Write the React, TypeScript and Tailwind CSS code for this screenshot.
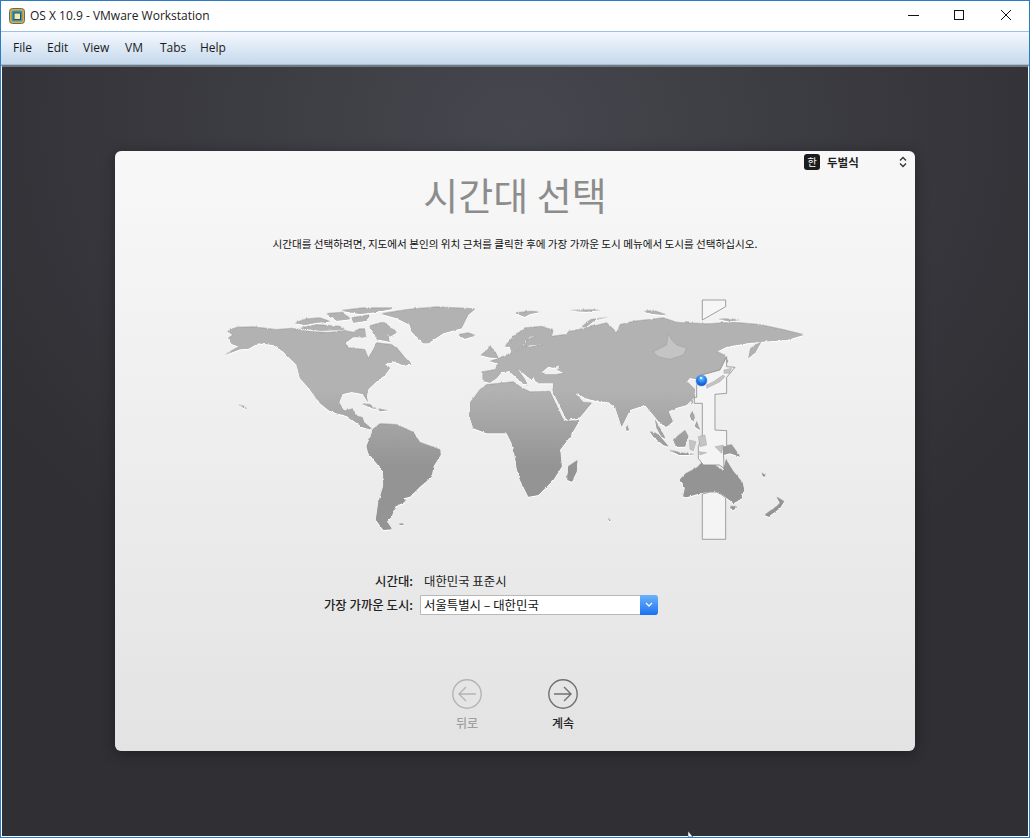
import React from 'react';

const kr = "font-['Noto_Sans_CJK_KR','Noto_Sans',sans-serif]";
const ui = "font-['Open_Sans','Noto_Sans',sans-serif]";

const menus = [
  { label: 'File', width: 'w-[34px]' },
  { label: 'Edit', width: 'w-[36px]' },
  { label: 'View', width: 'w-[42px]' },
  { label: 'VM', width: 'w-[35px]' },
  { label: 'Tabs', width: 'w-[40px]' },
  { label: 'Help', width: 'w-[40px]' },
];

// shapes traced from 3x crops, so coordinates are crop pixels
const westLand = [
  // north + central america
  'M22,125 L50,113 L100,112 L170,120 L215,116 L270,125 L330,128 L372,122 L400,128 L418,118 L435,118 L437,142 L400,142 L375,160 L385,175 L435,180 L445,205 L460,180 L470,160 L515,165 L535,180 L555,205 L575,225 L545,224 L520,212 L492,225 L510,235 L495,255 L472,272 L445,298 L440,320 L443,336 L428,312 L395,306 L368,312 L357,338 L372,364 L398,358 L405,378 L428,384 L432,398 L458,420 L445,416 L428,412 L405,395 L380,378 L345,368 L325,360 L300,340 L272,300 L298,340 L268,296 L240,265 L230,225 L190,185 L160,165 L115,160 L85,176 L60,178 L15,195 L58,170 L35,162 L25,146 L38,135 Z',
  // arctic islands
  'M225,100 L260,88 L300,85 L330,95 L290,98 L255,105 Z',
  'M240,115 L290,105 L360,110 L372,120 L300,122 Z',
  'M320,72 L365,68 L392,88 L350,92 Z',
  'M395,85 L450,75 L440,92 L400,98 Z',
  'M365,62 L430,55 L525,55 L470,66 L420,72 Z',
  'M445,110 L490,97 L530,128 L510,140 L500,130 L510,155 L470,148 L460,125 Z',
  // greenland, iceland
  'M485,72 L560,60 L650,52 L765,58 L745,75 L725,115 L670,130 L625,160 L610,160 L575,125 L570,105 L530,85 Z',
  'M715,135 L745,130 L765,137 L735,146 Z',
  // caribbean
  'M426,342 L450,345 L470,358 L445,350 Z',
  'M475,358 L500,362 L480,364 Z',
  // south america
  'M458,420 L480,402 L530,405 L580,428 L600,458 L660,480 L662,495 L640,530 L635,560 L600,590 L570,620 L550,625 L555,635 L525,650 L515,680 L500,695 L515,718 L490,720 L468,690 L475,640 L490,590 L490,545 L445,490 L440,470 L450,445 Z',
  'M536,702 L552,702 L545,706 Z',
  'M58,344 L72,350 L82,358 L68,352 Z',
];

const eastLand = [
  // eurasia with baltic and black sea cut out
  'M-112,247 L-75,240 L-65,220 L-90,215 L-60,205 L-25,190 L-30,170 L-45,170 L-20,140 L15,115 L65,110 L100,123 L95,140 L135,135 L150,125 L200,115 L260,100 L290,128 L300,105 L340,95 L430,85 L470,98 L560,103 L640,98 L720,105 L790,120 L850,135 L800,150 L725,155 L680,160 L620,170 L590,185 L610,195 L625,215 L600,240 L555,255 L530,268 L510,264 L500,275 L525,300 L525,320 L500,345 L465,355 L445,365 L458,395 L440,410 L420,400 L400,375 L375,345 L330,360 L305,410 L285,350 L260,335 L240,335 L195,325 L175,310 L165,312 L190,338 L215,340 L180,382 L140,390 L98,303 L100,280 L50,280 L40,260 L35,270 L10,250 L-10,235 L15,270 L22,287 L0,273 L-20,255 L-32,243 L-55,247 L-70,265 L-90,278 L-112,273 Z M-20,190 L15,165 L20,150 L50,136 L30,140 L12,160 L5,175 Z M15,168 L70,162 L30,172 Z M65,247 L85,230 L100,233 L120,225 L112,240 L133,250 L110,255 L75,255 Z',
  // africa
  'M-150,340 L-120,300 L-100,285 L-20,277 L5,295 L30,307 L90,305 L132,395 L178,392 L150,440 L120,480 L125,530 L100,570 L80,590 L55,615 L25,620 L0,570 L-10,535 L-12,515 L-25,460 L-40,430 L-100,430 L-140,415 L-150,385 Z',
  'M145,530 L172,512 L170,545 L155,575 L142,570 Z',
  // uk
  'M-120,195 L-100,185 L-90,170 L-75,185 L-65,205 L-95,202 Z',
  'M685,205 L692,176 L724,155 L706,188 Z',
  'M185,112 L212,90 L265,82 L226,90 L198,112 Z',
  'M-15,70 L30,65 L60,66 L30,72 L15,80 Z',
  'M150,62 L240,60 L200,65 Z',
  'M372,65 L400,62 L440,76 L400,72 Z',
  'M595,87 L660,90 L625,94 Z',
  'M318,405 L327,420 L320,423 Z',
  'M390,425 L415,435 L445,470 L430,465 L400,440 Z',
  'M445,480 L480,490 L525,495 L480,495 Z',
  'M460,450 L495,422 L505,440 L495,470 L468,470 Z',
  'M405,390 L422,420 L436,446 L424,440 L410,415 Z',
  'M455,350 L470,352 L460,362 Z',
  'M515,365 L525,380 L520,395 L510,380 Z',
  'M530,395 L540,420 L525,410 Z',
  'M514,330 L520,335 L514,344 Z',
  'M610,470 L635,465 L660,500 L630,490 L610,495 Z',
  'M480,570 L497,552 L530,535 L545,520 L570,518 L590,530 L605,540 L612,535 L618,510 L640,545 L668,580 L672,600 L660,630 L640,640 L625,628 L605,612 L590,605 L570,605 L540,610 L500,622 L490,620 L495,595 Z',
  'M630,650 L648,650 L640,662 Z',
  'M735,675 L770,650 L780,640 L770,622 L792,635 L780,655 L745,680 Z',
  'M266,688 L272,692 L266,693 Z',
  'M725,550 L738,558 L730,560 Z',
];

const lightLand = [
  'M400,185 L440,165 L445,130 L455,150 L470,165 L500,175 L490,195 L450,208 L415,200 Z',
  'M560,295 L600,275 L615,260 L610,255 L580,275 L560,285 Z',
  'M612,240 L635,235 L628,250 L612,250 Z',
  'M535,440 L555,435 L560,465 L540,470 Z',
  'M585,470 L610,465 L605,490 Z',
  'M508,450 L528,455 L520,482 L510,478 Z',
  'M538,485 L560,488 L540,495 Z',
];

function WorldMap() {
  return (
    <svg viewBox="220 290 600 255" className="ml-[105px] mt-[36px] block h-[255px] w-[600px]">
      <defs>
        <linearGradient id="land" gradientUnits="userSpaceOnUse" x1="0" y1="300" x2="0" y2="530">
          <stop offset="0" stopColor="#b2b2b2" />
          <stop offset="1" stopColor="#949494" />
        </linearGradient>
        <filter id="coast" filterUnits="userSpaceOnUse" x="215" y="285" width="610" height="265">
          <feTurbulence type="fractalNoise" baseFrequency="0.28" numOctaves="2" seed="4" result="noise" />
          <feDisplacementMap in="SourceGraphic" in2="noise" scale="2.4" xChannelSelector="R" yChannelSelector="G" result="rough" />
          <feDropShadow in="rough" dx="0" dy="-0.4" stdDeviation="0.3" floodColor="#6c6c6c" result="edge" />
          <feDropShadow in="edge" dx="0" dy="1" stdDeviation="0.4" floodColor="#ffffff" />
        </filter>
        <radialGradient id="pin" cx="0.5" cy="0.3" r="0.7">
          <stop offset="0" stopColor="#7cc8ff" />
          <stop offset="0.55" stopColor="#1f7ff0" />
          <stop offset="1" stopColor="#0b4fc0" />
        </radialGradient>
      </defs>
      <g filter="url(#coast)" fill="url(#land)" fillRule="evenodd">
        {westLand.map((d, i) => (
          <path key={i} d={d} transform="translate(220 290) scale(0.3333)" />
        ))}
        {eastLand.map((d, i) => (
          <path key={i} d={d} transform="translate(520 290) scale(0.3333)" />
        ))}
      </g>
      <g transform="translate(520 290) scale(0.3333)">
        <path d="M547,30 L617,30 L617,50 L547,90 Z" fill="#f6f6f6" stroke="#8a8a8a" strokeWidth="2.4" />
        <path
          d="M530,285 L545,255 L600,240 L620,200 L620,230 L645,232 L620,262 L620,310 L585,313 L585,420 L620,422 L620,470 L610,470 L612,535 L598,525 L550,525 L535,505 L535,470 L547,435 L547,340 L523,340 L523,322 L530,322 Z"
          fill="#f4f4f5"
          stroke="#8a8a8a"
          strokeWidth="2.4"
        />
        <path d="M547,612 L570,606 L590,606 L605,614 L617,624 L617,748 L547,748 Z" fill="#f4f4f5" stroke="#8a8a8a" strokeWidth="2.4" />
        {lightLand.map((d, i) => (
          <path key={i} d={d} fill="#c4c4c4" stroke="#8e8e8e" strokeWidth="1" />
        ))}
      </g>
      <circle cx="701.5" cy="380.5" r="5.5" fill="url(#pin)" stroke="#5f8fd0" strokeWidth="0.5" />
      <circle cx="701" cy="378" r="1" fill="#ffffff" />
    </svg>
  );
}

function NavButton({ label, back }: { label: string; back?: boolean }) {
  const color = back ? '#b4b4b4' : '#707070';
  return (
    <div className="flex w-[96px] flex-col items-center">
      <svg viewBox="0 0 30 30" className="block h-[30px] w-[30px]" fill="none" stroke={color} strokeWidth="1.4">
        <circle cx="15" cy="15" r="14.2" />
        {back ? <path d="M24,15 H7 M14,8 L7,15 L14,22" /> : <path d="M6,15 H23 M16,8 L23,15 L16,22" />}
      </svg>
      <div className={`mt-[5px] h-[18px] text-[12px] font-medium leading-[18px] ${back ? 'text-[#a0a0a0]' : 'text-[#222]'}`}>
        {label}
      </div>
    </div>
  );
}

export default function App() {
  return (
    <div className={`relative flex h-[838px] w-[1030px] flex-col overflow-hidden border border-[#2b7cc4] bg-white ${kr}`}>
      <div className="flex h-[30px] shrink-0 items-center bg-white">
        <svg viewBox="0 0 16 16" className="ml-[8px] h-[16px] w-[16px]">
          <rect x="0.5" y="0.5" width="15" height="15" rx="3" fill="#f0a92e" stroke="#5d6a6e" />
          <rect x="2.5" y="2.5" width="11" height="11" rx="1.5" fill="#2a9db5" />
          <rect x="5" y="5" width="6.5" height="6.5" fill="#f2e7b0" stroke="#3b4a50" />
        </svg>
        <span className={`ml-[5px] text-[12px] text-[#222] ${ui}`}>OS X 10.9 - VMware Workstation</span>
        <div className="ml-auto flex h-full items-center">
          <svg viewBox="0 0 46 30" className="h-[30px] w-[46px]" stroke="#111" fill="none">
            <path d="M17,14.5 H28" />
          </svg>
          <svg viewBox="0 0 46 30" className="h-[30px] w-[46px]" stroke="#111" fill="none">
            <rect x="17.5" y="9.5" width="9" height="9" />
          </svg>
          <svg viewBox="0 0 46 30" className="h-[30px] w-[46px]" stroke="#111" fill="none">
            <path d="M18,9 L28,19 M28,9 L18,19" />
          </svg>
        </div>
      </div>
      <div className={`flex h-[34px] shrink-0 items-center border-y border-[#9cc0e0] bg-gradient-to-b from-[#f4f8fe] to-[#c6d9ec] pl-[12px] text-[12px] text-[#1a1a1a] ${ui}`}>
        {menus.map(m => (
          <span key={m.label} className={m.width}>
            {m.label}
          </span>
        ))}
      </div>
      <div className="flex flex-1 justify-center bg-[radial-gradient(ellipse_620px_520px_at_515px_60px,#46464e_0%,#2f2f34_100%)] border-t-2 border-t-[#77777a] border-x border-b border-x-white border-b-white">
        <div className="mt-[84px] flex h-[600px] w-[800px] flex-col rounded-[6px] bg-gradient-to-b from-[#f8f8f8] to-[#e3e3e3] shadow-[0_2px_14px_rgba(0,0,0,0.35)]">
          <div className="flex h-[19px] items-start justify-end pt-[3px]">
            <span className="flex h-[16px] w-[16px] items-center justify-center rounded-[3px] bg-[#1c1c1c] text-[10px] leading-none text-white">한</span>
            <span className="ml-[7px] w-[72px] text-[11.5px] font-bold leading-[16px] text-[#222]">두벌식</span>
            <svg viewBox="0 0 8 12" className="mr-[8px] mt-[2px] h-[12px] w-[8px]" fill="none" stroke="#333" strokeWidth="1.3">
              <path d="M1,4.5 L4,1.5 L7,4.5 M1,7.5 L4,10.5 L7,7.5" />
            </svg>
          </div>
          <div className="h-[50px] text-center text-[38px] font-normal leading-[47px] text-[#8c8c8c]">시간대 선택</div>
          <div className="mt-[14px] h-[20px] text-center text-[10.6px] leading-[20px] text-[#111]">
            시간대를 선택하려면, 지도에서 본인의 위치 근처를 클릭한 후에 가장 가까운 도시 메뉴에서 도시를 선택하십시오.
          </div>
          <WorldMap />
          <div className="mt-[26px] flex h-[20px] items-center text-[12.4px] text-[#222]">
            <div className="w-[298px] text-right font-medium">시간대:</div>
            <div className="ml-[11px]">대한민국 표준시</div>
          </div>
          <div className="mt-[4px] flex h-[20px] items-center text-[12.4px] text-[#222]">
            <div className="w-[298px] text-right font-medium">가장 가까운 도시:</div>
            <div className="ml-[7px] flex h-[20px] w-[238px] items-stretch rounded-r-[3px] border border-[#b8b8b8] bg-white">
              <span className="flex-1 pl-[3px] leading-[18px] text-[#111]">서울특별시 – 대한민국</span>
              <span className="-my-px -mr-px flex w-[18px] items-center justify-center rounded-r-[3px] bg-gradient-to-b from-[#6cb3fa] to-[#1a6ff0]">
                <svg viewBox="0 0 8 6" className="h-[6px] w-[8px]" fill="none" stroke="#fff" strokeWidth="1.3">
                  <path d="M1,1 L4,4 L7,1" />
                </svg>
              </span>
            </div>
          </div>
          <div className="mt-[64px] flex justify-center">
            <NavButton label="뒤로" back />
            <NavButton label="계속" />
          </div>
        </div>
      </div>
      <svg viewBox="0 0 6 6" className="absolute left-[687px] top-[830px] h-[6px] w-[6px]">
        <path d="M0,0 L0,6 L5,6 Z" fill="#fff" stroke="#222" strokeWidth="0.5" />
      </svg>
    </div>
  );
}
